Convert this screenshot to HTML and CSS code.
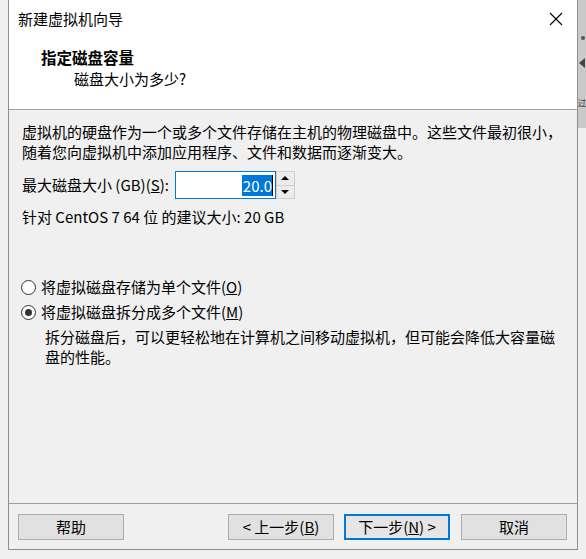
FILE: index.html
```html
<!DOCTYPE html>
<html lang="zh-CN">
<head>
<meta charset="utf-8">
<title>新建虚拟机向导</title>
<link rel="stylesheet" href="styles.css">
</head>
<body>
<div class="screen">
  <div class="window">
    <div class="titlebar">
      <span class="title">新建虚拟机向导</span>
      <svg class="close" width="14" height="14" viewBox="0 0 14 14"><path d="M1 1 L13 13 M13 1 L1 13" stroke="#000" stroke-width="1.1" fill="none"/></svg>
    </div>
    <div class="header">
      <div class="h-title">指定磁盘容量</div>
      <div class="h-sub">磁盘大小为多少?</div>
    </div>
    <div class="content">
      <p class="intro">虚拟机的硬盘作为一个或多个文件存储在主机的物理磁盘中。这些文件最初很小，<br>随着您向虚拟机中添加应用程序、文件和数据而逐渐变大。</p>
      <div class="size-row">
        <span class="size-label">最大磁盘大小 (GB)(<u>S</u>):</span>
        <div class="spin">
          <div class="spin-input"><span class="sel">20.0</span><span class="caret"></span></div>
          <div class="spin-btns">
            <div class="spin-btn"><span class="tri-up"></span></div>
            <div class="spin-btn"><span class="tri-down"></span></div>
          </div>
        </div>
      </div>
      <p class="rec">针对 CentOS 7 64 位 的建议大小: 20 GB</p>
      <div class="radio radio-first"><span class="circle"></span><span>将虚拟磁盘存储为单个文件(<u>O</u>)</span></div>
      <div class="radio"><span class="circle checked"></span><span>将虚拟磁盘拆分成多个文件(<u>M</u>)</span></div>
      <p class="desc">拆分磁盘后，可以更轻松地在计算机之间移动虚拟机，但可能会降低大容量磁<br>盘的性能。</p>
    </div>
    <div class="footer">
      <button class="btn">帮助</button>
      <button class="btn back">&lt; 上一步(<u>B</u>)</button>
      <button class="btn next">下一步(<u>N</u>) &gt;</button>
      <button class="btn cancel">取消</button>
    </div>
  </div>
  <div class="side">
    <div class="side-top">
      <span class="side-dot"></span>
      <span class="side-arrow"></span>
      <span class="side-char">过</span>
    </div>
  </div>
</div>
</body>
</html>
```
FILE: styles.css
```css
html, body {
  margin: 0;
  padding: 0;
}
body {
  background: #f0f0f0;
  font-family: "Noto Sans CJK SC", "Microsoft YaHei", sans-serif;
  font-size: 15px;
  color: #000;
  line-height: 20px;
}
.screen {
  display: flex;
  width: 586px;
  height: 559px;
  padding-left: 8px;
  box-sizing: border-box;
  overflow: hidden;
}
.window {
  width: 570px;
  height: 550px;
  flex: none;
  box-sizing: border-box;
  border: 1px solid #8f8f8f;
  border-top: none;
  display: flex;
  flex-direction: column;
  background: #f0f0f0;
}
.titlebar {
  height: 38px;
  flex: none;
  background: #fff;
  display: flex;
  align-items: center;
  justify-content: space-between;
  padding: 0 14px 0 9px;
}
.close {
  display: block;
  margin-top: -1px;
}
.header {
  height: 72px;
  flex: none;
  box-sizing: border-box;
  background: #fff;
  border-bottom: 1px solid #a0a0a0;
  padding: 9px 0 0 32px;
}
.h-title {
  font-weight: bold;
  font-size: 15.5px;
}
.h-sub {
  margin: 2px 0 0 33px;
}
.content {
  flex: 1;
  padding: 12px 13px 0;
}
.intro {
  margin: 0;
  white-space: nowrap;
}
.size-row {
  margin-top: 9px;
  height: 28px;
  display: flex;
  align-items: center;
}
.spin {
  display: flex;
  margin-left: 6px;
}
.spin-input {
  width: 101px;
  height: 28px;
  box-sizing: border-box;
  border: 1px solid #0078d7;
  background: #fff;
  display: flex;
  align-items: center;
  justify-content: flex-end;
  padding-right: 2px;
}
.sel {
  background: #0078d7;
  color: #fff;
  line-height: 21px;
  padding: 0 0 0 1px;
}
.caret {
  width: 1px;
  height: 21px;
  background: #000;
}
.spin-btns {
  width: 19px;
  height: 28px;
  display: flex;
  flex-direction: column;
}
.spin-btn {
  flex: 1;
  box-sizing: border-box;
  border: 1px solid #cfcfcf;
  background: #ececec;
  display: flex;
  align-items: center;
  justify-content: center;
}
.spin-btn + .spin-btn {
  border-top: none;
}
.tri-up {
  width: 0;
  height: 0;
  border-left: 4px solid transparent;
  border-right: 4px solid transparent;
  border-bottom: 4px solid #000;
}
.tri-down {
  width: 0;
  height: 0;
  border-left: 4px solid transparent;
  border-right: 4px solid transparent;
  border-top: 4px solid #000;
}
.rec {
  margin: 8px 0 0;
}
.radio {
  margin-top: 5px;
  display: flex;
  align-items: center;
}
.radio-first {
  margin-top: 50px;
}
.circle {
  width: 15px;
  height: 15px;
  box-sizing: border-box;
  border: 1px solid #333;
  border-radius: 50%;
  background: #fff;
  margin: 0 5px 0 -1px;
  display: flex;
  align-items: center;
  justify-content: center;
}
.circle.checked::after {
  content: "";
  width: 7px;
  height: 7px;
  border-radius: 50%;
  background: #333;
}
.desc {
  margin: 5px 0 0 23px;
  white-space: nowrap;
}
.footer {
  height: 46px;
  flex: none;
  box-sizing: border-box;
  border-top: 1px solid #a0a0a0;
  padding: 10px 10px 0 9px;
  display: flex;
  align-items: flex-start;
}
.btn {
  width: 106px;
  height: 26px;
  box-sizing: border-box;
  border: 1px solid #adadad;
  background: #e1e1e1;
  font-family: inherit;
  font-size: 15px;
  line-height: 20px;
  color: #000;
  padding: 0;
  margin: 0;
}
.back {
  margin-left: auto;
}
.next {
  margin-left: 10px;
  border: 2px solid #0078d7;
  background: #e5e5e5;
}
.cancel {
  margin-left: 11px;
}
.side {
  width: 8px;
  flex: none;
  overflow: hidden;
}
.side-top {
  height: 128px;
  background: #c9c9c9;
  display: flex;
  flex-direction: column;
  align-items: flex-start;
  overflow: hidden;
}
.side-dot {
  width: 4px;
  height: 4px;
  border-radius: 50%;
  background: #555;
  margin: 36px 0 0 3px;
}
.side-arrow {
  width: 0;
  height: 0;
  border-top: 5px solid transparent;
  border-bottom: 5px solid transparent;
  border-right: 6px solid #444;
  margin: 18px 0 0 1px;
}
.side-char {
  margin-top: 30px;
  font-size: 8px;
  line-height: 10px;
  color: #222;
}
```
